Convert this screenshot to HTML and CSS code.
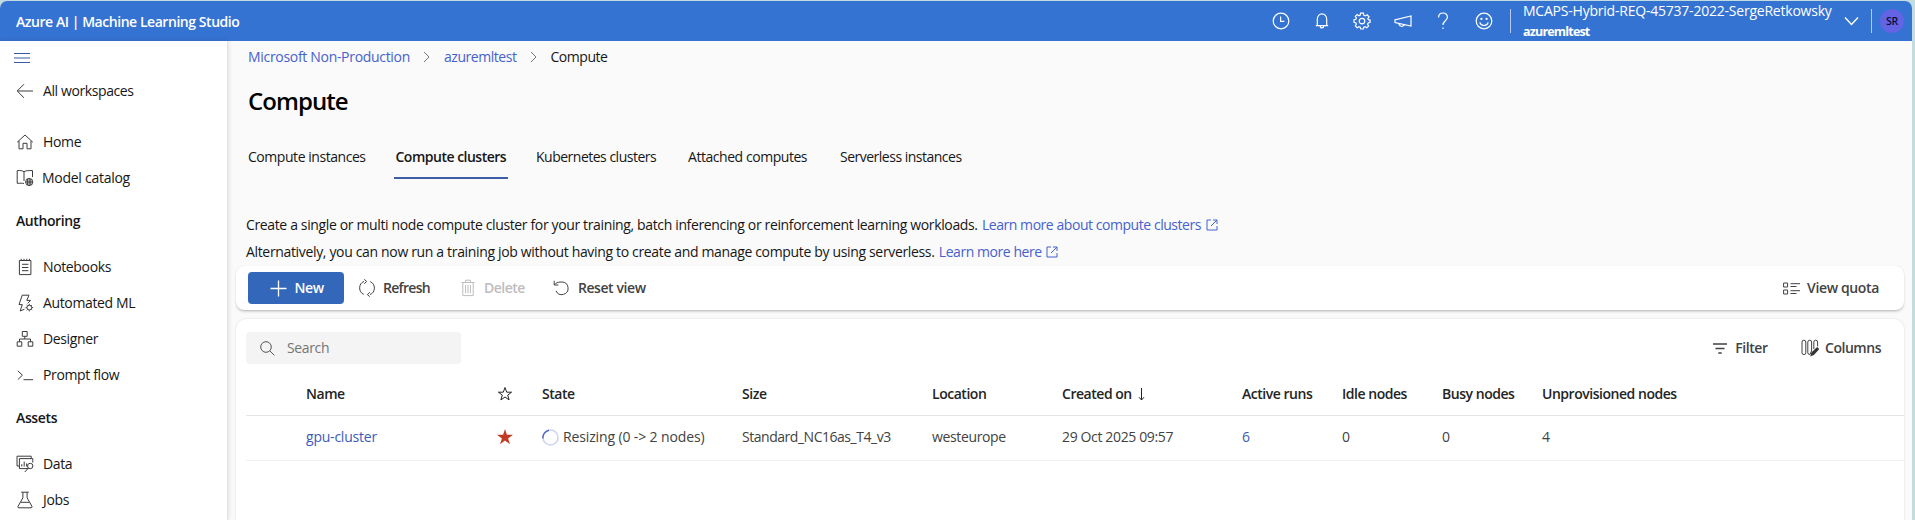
FILE: index.html
```
<!DOCTYPE html>
<html lang="en">
<head>
<meta charset="utf-8">
<title>Compute - Azure AI | Machine Learning Studio</title>
<link rel="stylesheet" href="styles.css">
</head>
<body>
<div class="window">
  <header class="topbar">
    <div class="brand">Azure AI | Machine Learning Studio</div>
    <div class="top-icons">
      <svg class="ic" viewBox="0 0 18 18"><circle cx="9" cy="9" r="7.8"/><path d="M8.6 4.6V9.4H12.4"/></svg>
      <svg class="ic" viewBox="0 0 18 18"><path d="M4.3 13.2V7.2A4.7 5.4 0 0 1 13.7 7.2V13.2M2.8 13.6H15.2M7.2 14C7.2 16.6 10.8 16.6 10.8 14"/></svg>
      <svg class="ic" viewBox="0 0 18 18"><path d="M7.6 1.2H10.4L10.9 3.3L12.3 3.9L14.2 2.8L16 4.8L14.8 6.6L15.4 7.7L17.1 8.1V10.4L15.2 10.9L14.6 12.2L15.6 14L13.8 15.8L12 14.7L10.8 15.2L10.3 17H7.7L7.2 15.2L5.9 14.7L4.2 15.8L2.3 13.9L3.4 12.1L2.9 10.9L1 10.4V7.8L2.9 7.3L3.4 6.1L2.3 4.4L4.2 2.6L5.9 3.7L7.1 3.2Z"/><circle cx="9" cy="9.1" r="2.8"/></svg>
      <svg class="ic" viewBox="0 0 18 18"><path d="M1 7.8L17 4V14L1 10.6ZM5 11.6C5 14.6 9.6 15.4 9.8 12.6"/></svg>
      <svg class="ic" viewBox="0 0 18 18"><path d="M4.6 5.4C4.6 -.4 13.4 -.4 13.4 5.2C13.4 8.8 9 8.8 9 13"/><path d="M9 15.4V17"/></svg>
      <svg class="ic" viewBox="0 0 18 18"><circle cx="9" cy="9" r="7.8"/><path d="M4.8 10.4C6 14.6 12 14.6 13.2 10.4"/><g class="solid"><circle cx="6.4" cy="6.9" r="1.1"/><circle cx="11.6" cy="6.9" r="1.1"/></g></svg>
    </div>
    <div class="workspace">
      <div class="tenant">MCAPS-Hybrid-REQ-45737-2022-SergeRetkowsky</div>
      <div class="ws-name">azuremltest</div>
    </div>
    <svg class="ws-chevron" viewBox="0 0 15 10"><path d="M1 1.5L7.5 8.5L14 1.5"/></svg>
    <div class="avatar-cell"><div class="avatar">SR</div></div>
  </header>

  <div class="body">
    <nav class="sidebar">
      <svg class="hamburger" viewBox="0 0 16 10"><path d="M0 .5H16M0 5H16M0 9.5H16"/></svg>
      <a class="nav back"><svg viewBox="0 0 18 18"><path d="M17 9H1.5M8 2.2L1.2 9L8 15.8"/></svg>All workspaces</a>
      <a class="nav"><svg viewBox="0 0 18 18"><path d="M1.2 9.2L9 2L16.8 9.2M3 8V15.8H7V10.3H11V15.8H15V8"/></svg>Home</a>
      <a class="nav catalog"><svg viewBox="0 0 18 18"><path d="M8 14.5C6.5 14 4 14.3 1.2 14.3V1.6C4 1.4 7 1.6 8 2.8C9 1.6 13 1.4 16.5 1.6V8M8 2.8V12"/><circle cx="13.2" cy="13" r="3.6"/><path d="M9.6 13H16.8M13.2 9.2V17M11.6 10V16M14.8 10V16"/></svg>Model catalog</a>
      <h3 class="group authoring">Authoring</h3>
      <a class="nav"><svg viewBox="0 0 18 18"><path d="M3.4 2.5H14.9V16.6H3.4ZM5.2 .8V3M8 .8V3M10.8 .8V3M13.4 .8V3M6 6.3H12.4M6 9.5H12.4M6 12.7H12.4"/></svg>Notebooks</a>
      <a class="nav"><svg viewBox="0 0 18 18"><path d="M8.5 15.2L4.2 17L6.3 10.6H3L6.2 1.2H13L10.8 6.4H14.6L11.6 9.4"/><circle cx="13.3" cy="13.6" r="2.4"/><path d="M13.3 9.8V11M13.3 16.2V17.4M9.5 13.6H10.8M15.8 13.6H17.1M10.7 11L11.6 11.9M15 15.3L15.9 16.2M15.9 11L15 11.9M11.6 15.3L10.7 16.2"/></svg>Automated ML</a>
      <a class="nav"><svg viewBox="0 0 18 18"><path d="M6.3 1.5H11.2V6.3H6.3ZM1.2 11.8H5.8V16.2H1.2ZM12.2 11.8H16.8V16.2H12.2ZM8.8 6.3V9H3.5V11.8M8.8 9H14.5V11.8"/></svg>Designer</a>
      <a class="nav"><svg viewBox="0 0 18 18"><path d="M1.8 4.8L6.4 9.2L1.8 13.6M7.5 13.7H17"/></svg>Prompt flow</a>
      <h3 class="group">Assets</h3>
      <a class="nav"><svg viewBox="0 0 18 18"><path d="M3.2 11H1V1.2H15.2V3.4M12.5 13.6H3.4V3.6H16.8V7.6M5.8 11.5V9.2M8.2 11.5V6.6M10.6 11.5V8.4"/><circle cx="14.2" cy="11" r="2.7"/><path d="M12.3 13.1L8.8 17"/></svg>Data</a>
      <a class="nav"><svg viewBox="0 0 18 18"><path d="M5.2 1.2H12.8M6.9 1.2V6.8L2 15.4Q1.6 16.8 3 16.8H15Q16.4 16.8 16 15.4L11.1 6.8V1.2M4.8 11.3H13.2"/></svg>Jobs</a>
    </nav>

    <main class="content">
      <div class="crumbs">
        <a class="link crumb-org">Microsoft Non-Production</a>
        <svg viewBox="0 0 7 12"><path d="M1 1L6 6L1 11"/></svg>
        <a class="link crumb-ws">azuremltest</a>
        <svg viewBox="0 0 7 12"><path d="M1 1L6 6L1 11"/></svg>
        <span class="crumb-ws">Compute</span>
      </div>
      <h1>Compute</h1>
      <div class="tabs">
        <a class="tab tab-instances">Compute instances</a>
        <a class="tab tab-clusters active">Compute clusters</a>
        <a class="tab tab-kube">Kubernetes clusters</a>
        <a class="tab tab-attached">Attached computes</a>
        <a class="tab tab-serverless">Serverless instances</a>
      </div>
      <div class="intro">
        <p>Create a single or multi node compute cluster for your training, batch inferencing or reinforcement learning workloads. <a class="link about">Learn more about compute clusters</a><svg viewBox="0 0 12 12"><path d="M5 1H1V11H11V7M7 1H11V5M11 1L5 7"/></svg></p>
        <p class="alt">Alternatively, you can now run a training job without having to create and manage compute by using serverless. <a class="link about">Learn more here</a><svg viewBox="0 0 12 12"><path d="M5 1H1V11H11V7M7 1H11V5M11 1L5 7"/></svg></p>
      </div>

      <section class="card toolbar">
        <button class="new"><svg viewBox="0 0 17 17"><path d="M8.5 .5V16.5M.5 8.5H16.5"/></svg>New</button>
        <button class="tool refresh"><svg viewBox="0 0 18 18"><path d="M6 2.4A7.1 7.1 0 0 0 5.8 15.4M12 15.6A7.1 7.1 0 0 0 12.2 2.6M6.2 .4L8.6 2.3L6.4 4.8M11.8 13.2L9.4 15.7L11.8 17.6"/></svg>Refresh</button>
        <button class="tool delete"><svg viewBox="0 0 14 18"><path d="M.6 3.5H13.4M4.6 3.3V1.2H9.4V3.3M1.8 3.6V16.6H12.2V3.6M4.6 6V14.2M7 6V14.2M9.4 6V14.2"/></svg>Delete</button>
        <button class="tool reset"><svg viewBox="0 0 16 16"><path d="M1.2 .8V5H5.4M1.4 4.8C2.8 3 5 2 8 2H9A6.3 6.3 0 1 1 3 10.8"/></svg>Reset view</button>
        <button class="tool quota"><svg viewBox="0 0 17 13"><path d="M.6 1H4.6V5H.6ZM.6 8H4.6V12H.6ZM7.5 1.7H17M7.5 4.5H13.5M7.5 8.7H17M7.5 11.5H13.5"/></svg>View quota</button>
      </section>

      <section class="card list">
        <div class="filters">
          <label class="search"><svg viewBox="0 0 15 15"><circle cx="6" cy="6" r="5.3"/><path d="M9.8 9.8L14.4 14.4"/></svg>Search</label>
          <button class="tool filter"><svg viewBox="0 0 14 11"><path d="M0 1H14M2.5 5.5H11.5M5.3 10H8.7"/></svg>Filter</button>
          <button class="tool columns"><svg viewBox="0 0 18 18"><path d="M1 3Q1 1.2 2.9 1.2T4.8 3V13.8Q4.8 15.6 2.9 15.6T1 13.8ZM6.8 3Q6.8 1.2 8.7 1.2T10.6 3V12L9 15.4Q6.8 15.6 6.8 13.8ZM12.8 10V3Q12.8 1.2 14.7 1.2T16.6 3V7.4"/><path class="pencil" d="M9.2 17.4L10.4 13.6L15.3 8.7Q16.5 7.9 17.4 8.9T17.5 11L12.8 16.1Z"/></svg>Columns</button>
        </div>
        <div class="row head">
          <div></div>
          <div>Name</div>
          <div><svg class="star" viewBox="0 0 16 16"><path d="M8 1.5L9.7 6.2H14.6L10.7 9.1L12.1 13.9L8 11L3.9 13.9L5.3 9.1L1.4 6.2H6.3Z"/></svg></div>
          <div>State</div>
          <div>Size</div>
          <div>Location</div>
          <div>Created on<svg class="sort" viewBox="0 0 7 13"><path d="M3.5 0V12M1 9.2L3.5 12L6 9.2"/></svg></div>
          <div>Active runs</div>
          <div>Idle nodes</div>
          <div>Busy nodes</div>
          <div>Unprovisioned nodes</div>
        </div>
        <div class="row">
          <div></div>
          <div><a class="link strong">gpu-cluster</a></div>
          <div><svg class="star filled" viewBox="0 0 16 16"><path d="M8 0L9.9 5.8H16L11.1 9.4L13 15.3L8 11.6L3 15.3L4.9 9.4L0 5.8H6.1Z"/></svg></div>
          <div class="state"><svg class="spinner" viewBox="0 0 17 17"><circle cx="8.5" cy="8.5" r="7.5"/><path d="M1 9.5A7.5 7.5 0 0 1 7 1.2"/></svg>Resizing (0 -&gt; 2 nodes)</div>
          <div class="size">Standard_NC16as_T4_v3</div>
          <div>westeurope</div>
          <div>29 Oct 2025 09:57</div>
          <div><a class="link strong">6</a></div>
          <div>0</div>
          <div>0</div>
          <div>4</div>
        </div>
      </section>
    </main>
  </div>
</div>
</body>
</html>
```
FILE: styles.css
```
* { box-sizing: border-box; }

body {
  margin: 0;
  height: 520px;
  overflow: hidden;
  background: #c3dce0;
  font: 14px/20px "Open Sans", "Noto Sans", sans-serif;
  letter-spacing: -0.36px;
  color: #161616;
}

h1, h3, p { margin: 0; }

svg {
  flex: none;
  fill: none;
  stroke: currentColor;
  stroke-width: 1;
}

button {
  display: flex;
  align-items: center;
  border: 0;
  padding: 0;
  background: none;
  font: inherit;
  letter-spacing: inherit;
  color: inherit;
}

.window {
  width: 1912px;
  height: 519px;
  margin-top: 1px;
  background: #fafafa;
  border-radius: 7px 7px 0 0;
  overflow: hidden;
}

/* Top bar */
.topbar {
  display: flex;
  align-items: center;
  height: 40px;
  padding-left: 16px;
  background: #3573d3;
  color: #fff;
}

.brand {
  padding-top: 1px;
  font-weight: 600;
  letter-spacing: -0.45px;
}

.top-icons {
  display: flex;
  gap: 22.5px;
  margin-left: auto;
  margin-right: 17.5px;
}

.ic {
  width: 18px;
  height: 18px;
  stroke-width: 1.2;
}

.solid { fill: #fff; stroke: none; }

.workspace {
  height: 24px;
  border-left: 1px solid #b4cbee;
  padding-left: 12px;
  width: 334px;
}

.tenant {
  margin-top: -8px;
  letter-spacing: -0.22px;
  white-space: nowrap;
}

.ws-name {
  padding-top: 1px;
  font-size: 12.5px;
  font-weight: 700;
  letter-spacing: -0.82px;
}

.ws-chevron {
  width: 15px;
  height: 10px;
  stroke-width: 1.4;
}

.avatar-cell {
  display: flex;
  align-items: center;
  height: 24px;
  margin-left: 12px;
  margin-right: 8px;
  padding-left: 8px;
  border-left: 1px solid #b4cbee;
}

.avatar {
  width: 24px;
  height: 24px;
  border-radius: 50%;
  background: #6264e4;
  color: #0b0b3b;
  font-size: 10.5px;
  font-weight: 600;
  line-height: 24px;
  text-align: center;
}

.body {
  display: flex;
  height: 479px;
}

/* Sidebar */
.sidebar {
  width: 228px;
  padding: 12px 0 0 14px;
  background: #fff;
  border-right: 1px solid #e4e4e4;
  box-shadow: 0 0 5px rgba(0, 0, 0, 0.14);
}

.hamburger {
  display: block;
  width: 16px;
  height: 10px;
  color: #3a5ba8;
}

.nav {
  display: flex;
  align-items: center;
  gap: 9px;
  height: 36px;
  padding-left: 2px;
}

.nav svg {
  width: 18px;
  height: 18px;
  color: #3c3c3c;
}

.nav.back { margin: 10px 0 15px; letter-spacing: -0.4px; }

.nav.catalog { letter-spacing: -0.27px; gap: 8px; }

.group {
  margin: 15px 0 18px 2px;
  font-size: 14px;
  font-weight: 600;
  line-height: 20px;
}

.authoring { letter-spacing: -0.41px; }

/* Page heading */
.content {
  flex: 1;
  padding: 6px 8px 0 8px;
}

.link { color: #4661ce; }
.link.strong { color: #3a5cb8; letter-spacing: -0.22px; }

.crumbs {
  display: flex;
  align-items: center;
  gap: 13.5px;
  margin-left: 12px;
}

.crumbs svg {
  width: 7px;
  height: 12px;
  color: #777;
}

.crumb-org { letter-spacing: -0.31px; }
.crumb-ws { letter-spacing: -0.46px; }

h1 {
  margin: 18px 0 0 12px;
  font-size: 24px;
  font-weight: 600;
  line-height: 32px;
  letter-spacing: -0.95px;
  color: #000;
}

.tabs {
  display: flex;
  margin: 30px 0 0 12px;
}

.tab {
  height: 32px;
  letter-spacing: -0.45px;
}

.tab-instances { width: 145.5px; }

.tab.active {
  width: 114px;
  padding-left: 2px;
  border-bottom: 2px solid #3f5ea8;
  font-weight: 600;
  letter-spacing: -0.5px;
}

.tab-kube { width: 152px; margin-left: 28.5px; letter-spacing: -0.5px; }
.tab-attached { width: 152px; }
.tab-serverless { letter-spacing: -0.5px; }

.intro {
  margin: 32px 0 0 10px;
  line-height: 27px;
  white-space: nowrap;
}

.intro .alt { letter-spacing: -0.34px; }
.intro .about { margin-left: 1px; letter-spacing: -0.45px; }

.intro svg {
  width: 12px;
  height: 12px;
  margin-left: 4.5px;
  vertical-align: -1px;
  color: #4661ce;
}

.intro .alt svg { margin-left: 4px; }

/* Cards */
.card {
  background: #fff;
  border-radius: 8px;
  color: #424242;
}

.toolbar {
  display: flex;
  align-items: center;
  height: 44px;
  margin-top: 1px;
  padding: 0 25px 0 12px;
  box-shadow: 0 2px 3px -1px rgba(0, 0, 0, 0.3), 0 0 1px rgba(0, 0, 0, 0.14);
  font-weight: 600;
}

.new {
  gap: 7.5px;
  width: 96px;
  height: 32px;
  padding-left: 22px;
  border-radius: 4px;
  background: #3267ba;
  color: #fff;
}

.new svg { width: 17px; height: 17px; stroke-width: 1.3; }

.tool { font-weight: 600; letter-spacing: -0.42px; }

.refresh { gap: 7px; margin-left: 14px; letter-spacing: -0.7px; }
.refresh svg { width: 18px; height: 18px; }

.delete { gap: 9px; margin-left: 31px; letter-spacing: -0.5px; color: #bdbdbd; }
.delete svg { width: 14px; height: 18px; }

.reset { gap: 8.5px; margin-left: 28.5px; }
.reset svg { width: 16px; height: 16px; }

.quota { gap: 7.5px; margin-left: auto; letter-spacing: -0.36px; }
.quota svg { width: 17px; height: 13px; }

.list {
  height: 220px;
  margin-top: 9px;
  padding: 13px 0 0 10px;
  border-radius: 10px;
  box-shadow: 0 0 2px rgba(0, 0, 0, 0.16);
}

.filters {
  display: flex;
  align-items: center;
  padding-right: 23px;
}

.search {
  display: flex;
  align-items: center;
  gap: 12.5px;
  width: 215px;
  height: 32px;
  margin-right: auto;
  padding-left: 13.5px;
  border-radius: 4px;
  background: #f4f4f4;
  color: #757575;
}

.search svg { width: 15px; height: 15px; color: #555; }

.filter { gap: 8.5px; }
.filter svg { width: 14px; height: 11px; stroke-width: 1.3; }

.columns { gap: 6.5px; margin-left: 33px; letter-spacing: -0.48px; }
.columns svg { width: 18px; height: 18px; }
.pencil { fill: #333; stroke: none; }

/* Table */
.row {
  display: grid;
  grid-template-columns: 60px 191px 45px 200px 190px 130px 180px 100px 100px 100px 1fr;
  align-items: center;
  height: 45px;
  padding-bottom: 2px;
  border-bottom: 1px solid #f0f0f0;
  white-space: nowrap;
}

.row.head {
  height: 52px;
  padding: 8px 0 0;
  border-bottom-color: #e4e4e4;
  font-weight: 600;
  letter-spacing: -0.47px;
  color: #242424;
}

.star {
  display: block;
  width: 16px;
  height: 16px;
}

.star.filled { fill: #c13a21; stroke: none; }

.sort {
  width: 7px;
  height: 13px;
  margin-left: 6.5px;
  vertical-align: -2px;
}

.state {
  display: flex;
  align-items: center;
  gap: 4px;
  letter-spacing: -0.13px;
}

.spinner {
  width: 17px;
  height: 17px;
  stroke: #ccd4f2;
  stroke-width: 1.5;
}

.spinner path { stroke: #5068c8; }

.size { letter-spacing: -0.47px; }
```
